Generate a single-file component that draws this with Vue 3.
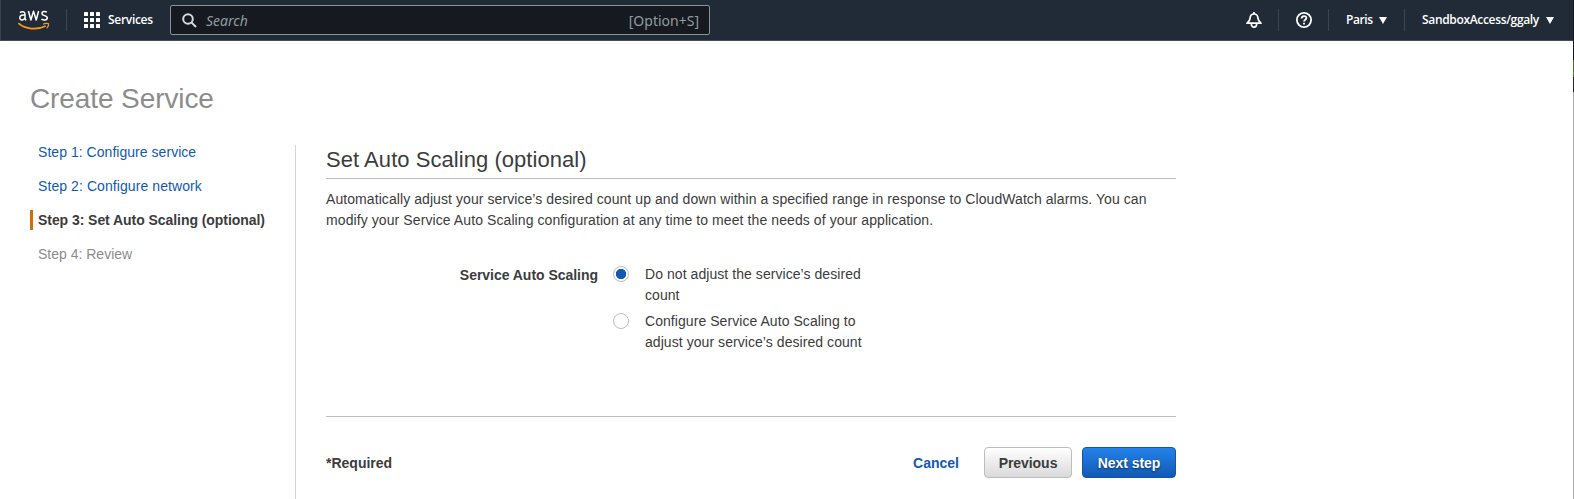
<script setup>
import { ref } from 'vue'

const steps = [
  { text: 'Step 1: Configure service', state: 'link', w: 'w1' },
  { text: 'Step 2: Configure network', state: 'link', w: 'w2' },
  { text: 'Step 3: Set Auto Scaling (optional)', state: 'current', w: 'w3' },
  { text: 'Step 4: Review', state: 'pending', w: 'w4' },
]
const options = [
  { id: 'none', lines: ['Do not adjust the service’s desired', 'count'] },
  { id: 'auto', lines: ['Configure Service Auto Scaling to', 'adjust your service’s desired count'] },
]
const selected = ref('none')
</script>

<template>
  <div class="page">
    <header class="topbar">
      <svg class="logo" width="32" height="20" viewBox="0 0 32 20">
        <g fill="none" stroke="#fff" stroke-width="1.5" stroke-linejoin="round">
          <path d="M2 2.6C3.6 1.3 7 1.2 7 4.3V7.8Q7 9.4 8.2 10.3M7 5.3C4.6 4.7 1.8 5.1 1.8 7.7C1.8 10.9 6.2 10.4 7 7.6" />
          <path d="M10.4 1L12.9 10L15.5 1.2L18.2 10L20.6 1" />
          <path d="M28.9 2.2C27.2 1.2 23.9 1.2 23.9 3.5C23.9 6.2 29.3 5 29.3 7.8C29.3 10.8 25.2 10.3 23.4 9.2" />
        </g>
        <path d="M.3 13.2C7.5 19.6 19 20.3 27.6 15.9" fill="none" stroke="#f7981f" stroke-width="1.7" />
        <path d="M25.2 14.2C27 13.2 29.8 13.1 30.5 13.8C30.8 15.2 30 17.2 28.7 18.3" fill="none" stroke="#f7981f" stroke-width="1.3" />
      </svg>
      <span class="rule rule-a"></span>
      <svg class="grid-icon" width="16" height="16" viewBox="0 0 16 16" fill="#fff">
        <template v-for="r in 3" :key="r">
          <rect v-for="c in 3" :key="c" :x="(c - 1) * 6" :y="(r - 1) * 6" width="4" height="4" rx=".5" />
        </template>
      </svg>
      <span class="nav services">Services</span>
      <div class="search">
        <svg width="15" height="15" viewBox="0 0 15 15" fill="none" stroke="#d5dbdb" stroke-width="2">
          <circle cx="6" cy="6" r="4.8" />
          <path d="M9.4 9.4L14 14" />
        </svg>
        <span class="placeholder">Search</span>
        <span class="shortcut">[Option+S]</span>
      </div>
      <div class="right">
        <svg class="bell" width="16" height="16" viewBox="0 0 16 16" fill="none" stroke="#fff" stroke-width="1.7" stroke-linejoin="round">
          <path d="M1 11.2C3.1 9.7 3.9 8.6 4.1 6.1C4.3 3.4 5.8 2 8 2S11.7 3.4 11.9 6.1C12.1 8.6 12.9 9.7 15 11.2Z" />
          <path d="M8 0V2M5.4 12V12.6A2.6 2.5 0 0 0 10.6 12.6V12" />
        </svg>
        <span class="rule rule-b"></span>
        <svg class="help" width="16" height="16" viewBox="0 0 16 16" fill="none" stroke="#fff" stroke-width="1.8">
          <circle cx="8" cy="8" r="7.1" />
          <path d="M5.6 6.5C5.6 3.3 10.4 3.4 10.4 6.1C10.4 7.7 8 7.7 8 9.6M8 10.7V12.4" />
        </svg>
        <span class="rule rule-c"></span>
        <span class="nav paris">Paris</span>
        <svg class="caret" width="8" height="7" viewBox="0 0 8 7"><path d="M0 0H8L4 7Z" fill="#fff" /></svg>
        <span class="rule rule-d"></span>
        <span class="nav account">SandboxAccess/ggaly</span>
        <svg class="caret" width="8" height="7" viewBox="0 0 8 7"><path d="M0 0H8L4 7Z" fill="#fff" /></svg>
      </div>
    </header>

    <h1>Create Service</h1>

    <div class="body">
      <nav class="steps">
        <div v-for="s in steps" :key="s.text" class="step" :class="s.state">
          <span :class="s.w">{{ s.text }}</span>
        </div>
      </nav>
      <main>
        <h2><span>Set Auto Scaling (optional)</span></h2>
        <p>
          <span class="l1">Automatically adjust your service’s desired count up and down within a specified range in response to CloudWatch alarms. You can</span><br />
          <span class="l2">modify your Service Auto Scaling configuration at any time to meet the needs of your application.</span>
        </p>
        <div class="field">
          <div class="label"><span>Service Auto Scaling</span></div>
          <div class="options">
            <div v-for="o in options" :key="o.id" class="option" @click="selected = o.id">
              <span class="radio" :class="{ on: selected === o.id }"></span>
              <div class="text">
                <div v-for="l in o.lines" :key="l"><span>{{ l }}</span></div>
              </div>
            </div>
          </div>
        </div>
        <footer>
          <span class="required">*Required</span>
          <a class="cancel">Cancel</a>
          <button class="btn">Previous</button>
          <button class="btn primary">Next step</button>
        </footer>
      </main>
    </div>
    <div class="edge"></div>
  </div>
</template>

<style>
body { margin: 0; background: #fff; }
</style>

<style scoped>
.page {
  position: relative;
  width: 1574px;
  height: 499px;
  overflow: hidden;
  background: #fff;
  color: #3c3c3c;
  font: 14px/21px "Liberation Sans", Arial, sans-serif;
}
.topbar {
  box-sizing: border-box;
  display: flex;
  align-items: center;
  height: 41px;
  padding-left: 17px;
  background: #212b37;
  border-bottom: 1px solid #454e57;
  border-left: 1px solid #39434d;
}
.logo { flex: none; }
.rule { width: 1px; height: 22px; background: #3c4650; flex: none; }
.rule-a { margin: 0 17px 0 16px; }
.grid-icon { flex: none; }
.nav { color: #fff; font: 600 12px/20px "Open Sans", sans-serif; white-space: nowrap; }
.services { width: 45px; margin-left: 8px; letter-spacing: -.3px; }
.paris { width: 27px; letter-spacing: -.4px; }
.account { width: 118px; letter-spacing: -.33px; }
.search {
  box-sizing: border-box;
  width: 540px;
  height: 30px;
  margin-left: 17px;
  display: flex;
  align-items: center;
  padding: 0 10px 0 11px;
  border: 1px solid #879596;
  border-radius: 2px;
  background: #16191f;
  color: #8f9d9e;
  font: 14px/20px "Noto Sans", sans-serif;
}
.placeholder { margin: 2px 0 0 9px; font-style: italic; }
.shortcut { margin: 2px 0 0 auto; }
.right { margin-left: auto; display: flex; align-items: center; padding-right: 20px; }
.rule-b { margin: 0 17px 0 16px; }
.rule-c { margin: 0 17px 0 16px; }
.rule-d { margin: 0 17px 0 17px; }
.caret { margin-left: 6px; }
h1 { margin: 40px 0 0 30px; height: 36px; font-size: 28px; line-height: 36px; font-weight: 400; letter-spacing: -.1px; color: #8c8c8c; white-space: nowrap; }
.body { display: flex; height: 354px; margin-top: 28px; }
.steps { box-sizing: border-box; width: 296px; border-right: 1px solid #d5d5d5; padding-left: 30px; flex: none; display: flex; flex-direction: column; gap: 14px; }
.step { height: 20px; line-height: 20px; padding-left: 8px; white-space: nowrap; }
.step:first-child { margin-top: -3px; }
.w1 { letter-spacing: .04px; }
.w2 { letter-spacing: .08px; }
.w3 { letter-spacing: -.057px; }
.link { color: #1259b3; }
.current { font-weight: 700; padding-left: 5px; border-left: 3px solid #d86c00; }
.pending { color: #8c8c8c; }
main { width: 850px; margin-left: 30px; }
h2 { margin: 0; height: 33px; border-bottom: 1px solid #bdbdbd; font-size: 22px; line-height: 30px; font-weight: 400; letter-spacing: .05px; }
p { margin: 10px 0 0; white-space: nowrap; }
.l1 { letter-spacing: .075px; }
.l2 { letter-spacing: .09px; }
.field { display: flex; margin-top: 33px; height: 120px; }
.label { width: 272px; text-align: right; font-weight: 700; padding-top: 1px; white-space: nowrap; letter-spacing: -.03px; }
.options { margin-left: 15px; display: flex; flex-direction: column; gap: 5px; }
.option { display: flex; height: 42px; white-space: nowrap; letter-spacing: .06px; }
.radio { box-sizing: border-box; width: 16px; height: 16px; margin: 2px 16px 0 0; border: 1px solid #bcbcbc; border-radius: 50%; background: #fff; flex: none; }
.radio.on { background: radial-gradient(circle, #1259b3 4.8px, #fff 5.5px); }
footer { display: flex; align-items: center; height: 92px; margin-top: 32px; border-top: 1px solid #bdbdbd; font-weight: 700; white-space: nowrap; }
.cancel { margin-left: auto; margin-right: 25px; color: #1259b3; }
.btn { box-sizing: border-box; width: 88px; height: 31px; margin-top: -1px; padding: 1px 0 0; border: 1px solid #bcbcbc; border-radius: 4px; background: linear-gradient(#fff, #dadada); color: #3c3c3c; font: 700 14px/21px "Liberation Sans", Arial, sans-serif; letter-spacing: -.05px; }
.primary { width: 94px; margin-left: 10px; border-color: #1356a8; background: linear-gradient(#2482ea, #1259b3); color: #fff; text-shadow: 0 1px 2px #0a2c5c; }
.edge { position: absolute; right: 0; top: 0; width: 1px; height: 499px; background: linear-gradient(#16191f 60px, #47740d 60px 77px, #222 77px 92px, #a8a8a8 92px); }
</style>
